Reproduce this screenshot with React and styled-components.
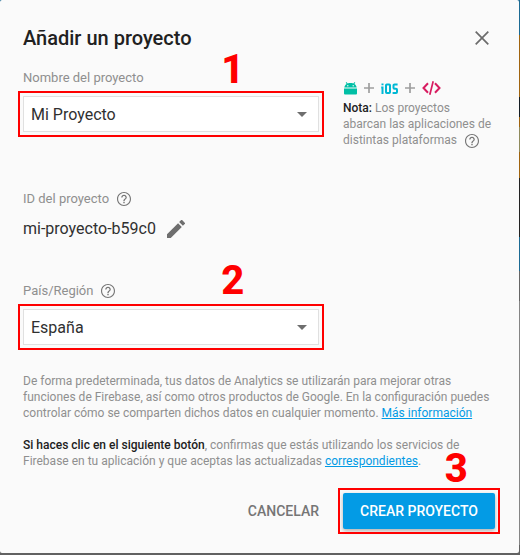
import React from 'react';
import { useState } from 'react';
import styled, { createGlobalStyle } from 'styled-components';

const countries = ['España', 'Argentina', 'Chile', 'Colombia', 'México', 'Perú'];

const HelpIcon = () => (
  <svg width='14' height='14' viewBox='2 2 20 20' fill='#757575'>
    <path d='M11 18h2v-2h-2v2zm1-16C6.480 2 2 6.480 2 12s4.480 10 10 10 10-4.480 10-10S17.520 2 12 2zm0 18.400c-4.630 0-8.400-3.770-8.400-8.400s3.770-8.400 8.400-8.400 8.400 3.770 8.400 8.400-3.770 8.400-8.400 8.400zm0-14.400c-2.210 0-4 1.790-4 4h1.800c0-1.200 1-2.200 2.200-2.200s2.200 1 2.200 2.200c0 2-3.100 1.750-3.100 5h1.800c0-2.250 3.100-2.500 3.100-5 0-2.210-1.790-4-4-4z' />
  </svg>
);

const CloseIcon = () => (
  <svg width='14' height='14' viewBox='0 0 14 14'>
    <path d='M.7.7l12.600 12.600M13.300.7L.7 13.300' stroke='#6b6b6b' strokeWidth='1.700' />
  </svg>
);

const PencilIcon = () => (
  <svg width='18' height='18' viewBox='3 3 18 18' fill='#6e6e6e'>
    <path d='M3 17.250V21h3.750L17.810 9.940l-3.750-3.750L3 17.250zM20.710 7.040a1 1 0 0 0 0-1.410l-2.340-2.340a1 1 0 0 0-1.410 0l-1.830 1.830 3.750 3.750 1.830-1.830z' />
  </svg>
);

const CaretIcon = () => (
  <svg width='10' height='5' viewBox='0 0 10 5' fill='#6e6e6e'>
    <path d='M0 0h10L5 5z' />
  </svg>
);

const AndroidIcon = () => (
  <svg width='13' height='13' viewBox='0 0 13 13' fill='#00bfa5'>
    <path d='M0 6.400h13v5a1 1 0 0 1-1 1H1a1 1 0 0 1-1-1z' />
    <path d='M.3 5.600C.5 3.900 1.400 2.700 2.700 2L1.700.7l.7-.6 1.300 1.400c1.700-.6 3.900-.6 5.600 0L10.600.1l.7.6-1 1.300c1.300.7 2.200 1.900 2.400 3.600z' />
    <circle cx='3.800' cy='3.700' r='.7' fill='#fafafa' />
    <circle cx='9.200' cy='3.700' r='.7' fill='#fafafa' />
  </svg>
);

const PlusIcon = () => (
  <svg width='10' height='10' viewBox='0 0 10 10'>
    <path d='M5 0v10M0 5h10' stroke='#9e9e9e' strokeWidth='1.700' />
  </svg>
);

const IosIcon = () => (
  <svg width='17' height='11' viewBox='0 0 17 11' fill='none' stroke='#00b8d4' strokeWidth='2'>
    <path d='M1.500.5v1.700M.2 4.500h1.300V11' />
    <rect x='5' y='1.500' width='4' height='8.500' rx='.8' />
    <path d='M16.600 1.500H13.500a1 1 0 0 0-1 1v2.200a1 1 0 0 0 1 1H15a1 1 0 0 1 1 1V9a1 1 0 0 1-1 1H11.600' />
  </svg>
);

const CodeIcon = () => (
  <svg width='19' height='14' viewBox='0 0 19 14' fill='none' stroke='#d81b60' strokeWidth='2'>
    <path d='M6 2.300L1.500 7 6 11.700M13 2.300L17.500 7 13 11.700' />
    <path d='M11.200.2L7.800 13.800' strokeWidth='1.700' />
  </svg>
);

const App = () => {
  const [name, setName] = useState('Mi Proyecto');
  const [country, setCountry] = useState('España');

  return (
    <>
      <GlobalStyle />
      <Backdrop>
        <Dialog aria-labelledby='dialog-title'>
          <Header>
            <Title id='dialog-title'>Añadir un proyecto</Title>
            <IconButton type='button' aria-label='Cerrar'>
              <CloseIcon />
            </IconButton>
          </Header>

          <FormRow>
            <Field>
              <Label htmlFor='project-name'>Nombre del proyecto</Label>
              <Highlight>
                <Box>
                  <TextInput
                    id='project-name'
                    value={name}
                    onChange={(e) => setName(e.target.value)}
                  />
                  <CaretIcon />
                </Box>
                <Step $lift={2}>1</Step>
              </Highlight>
            </Field>
            <Aside>
              <Platforms>
                <AndroidIcon />
                <PlusIcon />
                <IosIcon />
                <PlusIcon />
                <CodeIcon />
              </Platforms>
              <Note>
                <strong>Nota:</strong> Los proyectos abarcan las aplicaciones de
                distintas plataformas
                <HelpButton type='button' aria-label='Ayuda sobre plataformas'>
                  <HelpIcon />
                </HelpButton>
              </Note>
            </Aside>
          </FormRow>

          <IdRow>
            <Label as='div'>
              ID del proyecto
              <HelpButton type='button' aria-label='Ayuda sobre el ID'>
                <HelpIcon />
              </HelpButton>
            </Label>
            <ProjectId>
              mi-proyecto-b59c0
              <IconButton type='button' aria-label='Editar ID'>
                <PencilIcon />
              </IconButton>
            </ProjectId>
          </IdRow>

          <FormRow>
            <Field>
              <LabelRow>
                <Label htmlFor='country'>País/Región</Label>
                <HelpButton type='button' aria-label='Ayuda sobre el país'>
                  <HelpIcon />
                </HelpButton>
              </LabelRow>
              <Highlight>
                <Box>
                  <Select
                    id='country'
                    value={country}
                    onChange={(e) => setCountry(e.target.value)}
                  >
                    {countries.map((item) => (
                      <option key={item}>{item}</option>
                    ))}
                  </Select>
                  <CaretIcon />
                </Box>
                <Step $lift={4}>2</Step>
              </Highlight>
            </Field>
          </FormRow>

          <Terms>
            <p>
              De forma predeterminada, tus datos de Analytics se utilizarán para
              mejorar otras funciones de Firebase, así como otros productos de
              Google. En la configuración puedes controlar cómo se comparten
              dichos datos en cualquier momento. <a href='#info'>Más información</a>
            </p>
            <p>
              <strong>Si haces clic en el siguiente botón</strong>, confirmas que
              estás utilizando los servicios de Firebase en tu aplicación y que
              aceptas las actualizadas <a href='#terms'>correspondientes</a>.
            </p>
          </Terms>

          <Actions>
            <Button type='button'>Cancelar</Button>
            <Highlight>
              <Button type='button' $primary>
                Crear proyecto
              </Button>
              <Step $lift={0}>3</Step>
            </Highlight>
          </Actions>
        </Dialog>
      </Backdrop>
    </>
  );
};

const GlobalStyle = createGlobalStyle`
  * {
    box-sizing: border-box;
  }
  body {
    margin: 0;
    background: #616161;
    font-family: Roboto, 'Liberation Sans', sans-serif;
    color: #303030;
  }
  h1,
  p {
    margin: 0;
  }
  button,
  input,
  select {
    font-family: inherit;
  }
  svg {
    display: block;
    flex: none;
  }
`;
/* the page behind the dialog only shows at its right and bottom edges */
const Backdrop = styled.div`
  padding: 0 1px 2px 0;
  background: linear-gradient(
    #1b6a93 35px,
    #a0640f 35px 97px,
    #151c22 97px 117px,
    #a0640f 117px 127px,
    #8f8a5c 127px 152px,
    #a0640f 152px 178px,
    #222222 178px 237px,
    #1b6a93 237px 271px,
    #666666 271px 301px,
    #858585 301px 545px,
    #616161 545px
  );
`;
const Dialog = styled.main`
  padding: 24px 24px 24px 23px;
  background: #fafafa;
  border-radius: 2px;
`;
const Header = styled.header`
  display: flex;
  justify-content: space-between;
  align-items: center;
  height: 28px;
  padding-right: 6px;
  margin-bottom: 16px;
`;
const Title = styled.h1`
  font-size: 20px;
  font-weight: 500;
  line-height: 28px;
  color: #212121;
`;
const IconButton = styled.button`
  display: flex;
  padding: 0;
  border: none;
  background: transparent;
  cursor: pointer;
`;
const HelpButton = styled(IconButton)`
  display: inline-flex;
  margin-left: 8px;
  vertical-align: bottom;
`;
const FormRow = styled.section`
  display: grid;
  grid-template-columns: 37fr 19fr;
  column-gap: 24px;
`;
const Field = styled.div`
  min-width: 0;
`;
const LabelRow = styled.div`
  display: flex;
  align-items: center;
`;
const Label = styled.label`
  display: flex;
  align-items: center;
  font-size: 13px;
  line-height: 20px;
  color: #8f8f8f;
`;
const Highlight = styled.div`
  position: relative;
  &::after {
    content: '';
    position: absolute;
    inset: -5px;
    border: 2px solid #ff0000;
    pointer-events: none;
  }
`;
const Step = styled.span`
  position: absolute;
  bottom: calc(100% + ${({ $lift }) => $lift}px);
  left: 67%;
  font-family: Roboto, sans-serif;
  font-size: 40px;
  font-weight: 800;
  line-height: 48px;
  color: #ff0000;
  pointer-events: none;
`;
const Box = styled.div`
  display: flex;
  align-items: center;
  height: 36px;
  margin-top: 8px;
  padding-right: 11px;
  background: #ffffff;
  border: 1px solid #e0e0e0;
`;
const TextInput = styled.input`
  flex: 1;
  min-width: 0;
  height: 100%;
  padding: 0 7px;
  border: none;
  outline: none;
  background: transparent;
  font-size: 16px;
  color: #303030;
`;
const Select = styled(TextInput).attrs({ as: 'select' })`
  appearance: none;
`;
const Aside = styled.aside`
  padding-top: 12px;
`;
const Platforms = styled.div`
  display: flex;
  align-items: center;
  gap: 7px;
  height: 16px;
  margin-bottom: 4px;
  padding-left: 1px;
`;
const Note = styled.p`
  font-size: 12px;
  line-height: 16px;
  color: #8f8f8f;
  strong {
    font-weight: 500;
    color: #212121;
  }
`;
const IdRow = styled.section`
  margin: 41px 0 40px;
`;
const ProjectId = styled.div`
  display: flex;
  align-items: center;
  gap: 11px;
  margin-top: 8px;
  font-size: 16px;
  line-height: 24px;
`;
const Terms = styled.section`
  display: grid;
  gap: 16px;
  margin: 28px 0 24px;
  font-size: 12px;
  line-height: 16px;
  color: #8f8f8f;
  strong {
    font-weight: 500;
    color: #212121;
  }
  a {
    color: #039be5;
  }
`;
const Actions = styled.footer`
  display: flex;
  justify-content: flex-end;
  gap: 8px;
`;
const Button = styled.button`
  display: block;
  height: 36px;
  min-width: ${({ $primary }) => ($primary ? '152px' : '88px')};
  padding: 0 16px;
  border: none;
  border-radius: 2px;
  font-size: 14px;
  font-weight: 500;
  text-transform: uppercase;
  cursor: pointer;
  color: ${({ $primary }) => ($primary ? '#ffffff' : '#757575')};
  background: ${({ $primary }) => ($primary ? '#039be5' : 'transparent')};
  box-shadow: ${({ $primary }) =>
    $primary ? '0 2px 4px rgba(0, 0, 0, 0.3)' : 'none'};
`;
export default App;
